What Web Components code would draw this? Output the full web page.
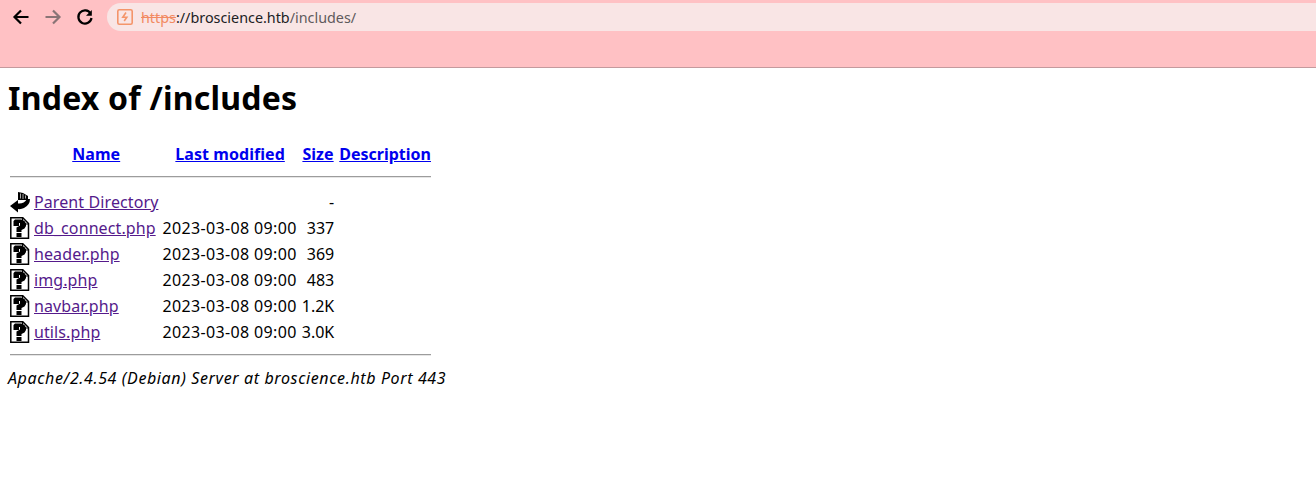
<!DOCTYPE html>
<html>
<head>
<meta charset="utf-8">
<title>Index of /includes</title>
<style>
    html, body { margin: 0; padding: 0; background: #fff; }
</style>
</head>
<body>
<browser-toolbar url-host="broscience.htb" url-path="/includes/"></browser-toolbar>
<index-page heading="Index of /includes" footer="Apache/2.4.54 (Debian) Server at broscience.htb Port 443"></index-page>

<template id="toolbar-template">
    <style>
        :host {
            display: block;
            background: #ffc1c4;
            border-bottom: 1px solid #c49a9d;
            padding-top: 3px;
            height: 64px;
        }
        .row { display: flex; align-items: center; height: 28px; padding-left: 9px; }
        .btn { width: 24px; height: 24px; margin-right: 8px; flex: none; }
        .btn.last { margin-right: 10px; }
        .btn svg { display: block; }
        .url {
            flex: 1;
            height: 28px;
            background: #f9e5e5;
            border-radius: 14px 0 0 14px;
            display: flex;
            align-items: center;
            padding-left: 10px;
            font: 14.35px "Noto Sans", "Open Sans", sans-serif;
            color: #5f5a5c;
        }
        .url svg { margin-right: 8px; flex: none; }
        .scheme { color: #f28a62; text-decoration: line-through; }
        .host { color: #202124; }
    </style>
    <div class="row">
        <div class="btn"><svg width="24" height="24" viewBox="0 0 24 24" fill="none" stroke="#000" stroke-width="2.200"><path d="M19.500 12H6M12 5.500 5.500 12l6.500 6.500"/></svg></div>
        <div class="btn"><svg width="24" height="24" viewBox="0 0 24 24" fill="none" stroke="#8a7476" stroke-width="2.200"><path d="M4.500 12H18M12 5.500l6.500 6.500-6.500 6.500"/></svg></div>
        <div class="btn last"><svg width="24" height="24" viewBox="0 0 24 24" fill="none" stroke="#000" stroke-width="2.200"><path d="M17.600 8.500A6.600 6.600 0 1 0 18.500 13"/><path d="M18.800 5v5.800H13z" fill="#000" stroke="none"/></svg></div>
        <div class="url">
            <svg width="16" height="16" viewBox="0 0 16 16" fill="none" stroke="#f4956a" stroke-width="1.600"><rect x=".8" y=".8" width="14.400" height="14.400" rx="1.500"/><path d="M9 3.500 5.800 8.300h4L7.200 12"/></svg>
            <span><span class="scheme">https</span><span class="host">://<span id="host"></span></span><span id="path"></span></span>
        </div>
    </div>
</template>

<template id="page-template">
    <style>
        :host {
            display: block;
            padding: 0 8px;
            font: 16px "Noto Sans", "Open Sans", sans-serif;
            color: #000;
        }
        h1 {
            margin: 0;
            padding-top: 8px;
            font-size: 32px;
            line-height: 43px;
            font-weight: 700;
            letter-spacing: .22px;
        }
        .foot { font-style: italic; line-height: 20px; letter-spacing: .62px; }
    </style>
    <h1></h1>
    <dir-listing></dir-listing>
    <div class="foot"></div>
</template>

<template id="listing-template">
    <style>
        :host { display: block; margin-top: 21px; }
        table { border-spacing: 2px; border-collapse: separate; font: inherit; }
        th, td { padding: 0; height: 24px; line-height: 24px; white-space: nowrap; }
        th { font-weight: 700; text-align: center; letter-spacing: .05px; }
        th.desc { padding-left: 3px; letter-spacing: 0; }
        td.num { text-align: right; }
        td.date { padding: 0 3px 0 2px; letter-spacing: .36px; }
        td.icon { width: 22px; }
        td.icon svg { display: block; }
        a { color: #0000ee; }
        td a { color: #551a8b; letter-spacing: .1px; }
        .rule { margin-top: 8px; height: 2px; background: linear-gradient(#9c9c9c 50%, #e6e6e6 50%); }
        tr.sep th { height: 20px; vertical-align: top; }
    </style>
    <table></table>
</template>

<script>
// apache's old 20x22 gifs, redrawn as svg
const ICON_BACK = `<svg width="20" height="22" viewBox="0 0 20 22">
    <path d="M0 15 8 9v3.500Q14 13 17 8h3q0 6-6 9-3 1.500-6 1v3.500z" fill="#000"/>
    <path d="M8 1l5 1 5 3v4H8z" fill="#000"/>
    <path d="M10.500 2.500v5M13 3v5M15.500 4.500v3" stroke="#a8a8a8" stroke-width="1" fill="none"/>
</svg>`;

const ICON_UNKNOWN = `<svg width="20" height="22" viewBox="0 0 20 22">
    <path d="M.8.800h12l5.700 5.700v14.700H.8z" fill="#fff" stroke="#000" stroke-width="1.500"/>
    <path d="M12.500 1v6h6" fill="none" stroke="#000" stroke-width="1.200"/>
    <path d="M5 2.500h6l3.500 1.500L16 6.500V9l-1.500 2.500L11.500 13v2H6.500v-4.500l3.500-2V6H9v3H3.500V4zM6.500 16h5v4h-5z" fill="#000"/>
</svg>`;

const LISTING = [
    { icon: ICON_BACK, name: 'Parent Directory', date: '', size: '-' },
    { icon: ICON_UNKNOWN, name: 'db_connect.php', date: '2023-03-08 09:00', size: '337' },
    { icon: ICON_UNKNOWN, name: 'header.php', date: '2023-03-08 09:00', size: '369' },
    { icon: ICON_UNKNOWN, name: 'img.php', date: '2023-03-08 09:00', size: '483' },
    { icon: ICON_UNKNOWN, name: 'navbar.php', date: '2023-03-08 09:00', size: '1.2K' },
    { icon: ICON_UNKNOWN, name: 'utils.php', date: '2023-03-08 09:00', size: '3.0K' }
];

class BrowserToolbar extends HTMLElement {
    constructor() {
        super();
        this.attachShadow({mode: 'open'});
        this.shadowRoot.appendChild(document.getElementById('toolbar-template').content.cloneNode(true));
        this.shadowRoot.getElementById('host').textContent = this.getAttribute('url-host');
        this.shadowRoot.getElementById('path').textContent = this.getAttribute('url-path');
    }
}

class IndexPage extends HTMLElement {
    constructor() {
        super();
        this.attachShadow({mode: 'open'});
        this.shadowRoot.appendChild(document.getElementById('page-template').content.cloneNode(true));
        this.shadowRoot.querySelector('h1').textContent = this.getAttribute('heading');
        this.shadowRoot.querySelector('.foot').textContent = this.getAttribute('footer');
    }
}

class DirListing extends HTMLElement {
    constructor() {
        super();
        this.attachShadow({mode: 'open'});
        this.shadowRoot.appendChild(document.getElementById('listing-template').content.cloneNode(true));
        const sep = '<tr class="sep"><th colspan="5"><div class="rule"></div></th></tr>';
        const rows = LISTING.map(r => `<tr>
            <td class="icon">${r.icon}</td>
            <td><a href="#">${r.name}</a></td>
            <td class="date">${r.date}</td>
            <td class="num">${r.size}</td>
            <td></td>
        </tr>`).join('');
        this.shadowRoot.querySelector('table').innerHTML = `
            <tr>
                <th></th>
                <th><a href="#">Name</a></th>
                <th><a href="#">Last modified</a></th>
                <th><a href="#">Size</a></th>
                <th class="desc"><a href="#">Description</a></th>
            </tr>
            ${sep}${rows}${sep}`;
    }
}

window.customElements.define('browser-toolbar', BrowserToolbar);
window.customElements.define('index-page', IndexPage);
window.customElements.define('dir-listing', DirListing);
</script>
</body>
</html>
